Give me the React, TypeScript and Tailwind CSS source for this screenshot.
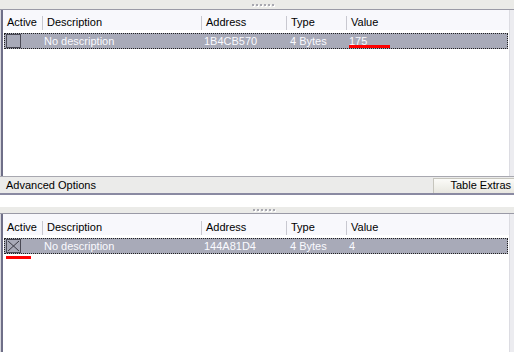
import React from "react";

type Entry = {
  active: boolean;
  description: string;
  address: string;
  type: string;
  value: string;
};

const font = { fontFamily: '"Liberation Sans", Arial, sans-serif' };

function Grip() {
  return (
    <div className="flex gap-[2px]">
      {[0, 1, 2, 3, 4, 5].map((i) => (
        <div key={i} className="w-[2px] h-[2px] bg-[#a8a8b0] shadow-[1px_1px_0_#ffffff]" />
      ))}
    </div>
  );
}

function Checkbox({ checked }: { checked: boolean }) {
  return (
    <div className="w-[15px] h-[14px] border border-[#4a4a55] bg-[#a8aab8] flex items-center justify-center">
      {checked && (
        <svg width="13" height="12" viewBox="0 0 13 12">
          <path d="M1 1 L12 11 M12 1 L1 11" stroke="#3a3a44" strokeWidth="1" />
        </svg>
      )}
    </div>
  );
}

function HeaderCell({ label, width, first }: { label: string; width: string; first?: boolean }) {
  return (
    <div className={`${width} flex items-center h-full ${first ? "" : "border-l border-[#c8c8d0]"} pl-[4px]`}>
      <span className="text-[#000000]">{label}</span>
    </div>
  );
}

function ListBox({
  entry,
  mark,
  headerClass,
}: {
  entry: Entry;
  mark: "value" | "active";
  headerClass: string;
}) {
  return (
    <div className="flex flex-1 min-h-0 border-t border-[#9a9aa6]">
      <div className="w-[3px] border-l border-[#d8d8de] bg-[#6f6f88] shrink-0" />
      <div className="flex-1 flex flex-col bg-white">
        <div className={`flex items-center bg-[#f8f8fc] ${headerClass}`}>
          <div className="flex items-center h-[14px] w-full">
            <HeaderCell label="Active" width="w-[39px]" first />
            <HeaderCell label="Description" width="w-[159px]" />
            <HeaderCell label="Address" width="w-[85px]" />
            <HeaderCell label="Type" width="w-[60px]" />
            <HeaderCell label="Value" width="w-[100px]" />
          </div>
        </div>
        <div className="mt-[3px] ml-[1px] mr-[1px] relative">
          <div className="h-[16px] flex items-center bg-[#a8aab8] outline-1 outline-dotted outline-[#202020] -outline-offset-1 text-[#fafaff]">
            <div className="w-[40px] pl-[2px] flex items-center">
              <Checkbox checked={entry.active} />
            </div>
            <div className="w-[160px]">{entry.description}</div>
            <div className="w-[86px]">{entry.address}</div>
            <div className="w-[59px]">{entry.type}</div>
            <div className="flex-1 relative">
              {entry.value}
              {mark === "value" && (
                <div className="absolute left-0 top-[12px] w-[41px] h-[3px] bg-[#ff0000]" />
              )}
            </div>
          </div>
          {mark === "active" && (
            <div className="absolute left-[2px] top-[18px] w-[25px] h-[3px] bg-[#ff0000]" />
          )}
        </div>
        <div className="flex-1" />
      </div>
      <div className="w-[5px] bg-[#ececf0] border-l border-[#dcdce2] shrink-0" />
    </div>
  );
}

export default function App() {
  const top: Entry = {
    active: false,
    description: "No description",
    address: "1B4CB570",
    type: "4 Bytes",
    value: "175",
  };
  const bottom: Entry = {
    active: true,
    description: "No description",
    address: "144A81D4",
    type: "4 Bytes",
    value: "4",
  };

  return (
    <div className="w-[514px] h-[352px] bg-white flex flex-col overflow-hidden text-[11px]" style={font}>
      {/* top splitter */}
      <div className="h-[9px] bg-[#ebebe8] flex items-center justify-center pl-[12px] shrink-0">
        <Grip />
      </div>

      {/* top list */}
      <div className="h-[167px] flex flex-col shrink-0">
        <ListBox entry={top} mark="value" headerClass="h-[20px] pt-[5px]" />
      </div>

      {/* advanced options bar */}
      <div className="h-[17px] bg-[#ebebea] border-t border-[#a8a8b0] flex items-center justify-between shrink-0">
        <span className="pl-[6px] text-black">Advanced Options</span>
        <div className="w-[81px] h-[15px] bg-gradient-to-b from-[#fbfbf8] to-[#e8e7e0] border-l border-t border-[#c6c5bd] flex items-center justify-end pr-[3px] text-black">
          Table Extras
        </div>
      </div>
      <div className="h-[2px] bg-[#8a8aa2] shrink-0" />

      {/* gap */}
      <div className="h-[12px] bg-white shrink-0" />

      {/* bottom splitter */}
      <div className="h-[6px] bg-[#ebebe8] flex items-center justify-center pl-[14px] shrink-0">
        <Grip />
      </div>

      {/* bottom list */}
      <div className="flex-1 flex flex-col min-h-0">
        <ListBox entry={bottom} mark="active" headerClass="h-[21px] pt-[6px]" />
      </div>
    </div>
  );
}
